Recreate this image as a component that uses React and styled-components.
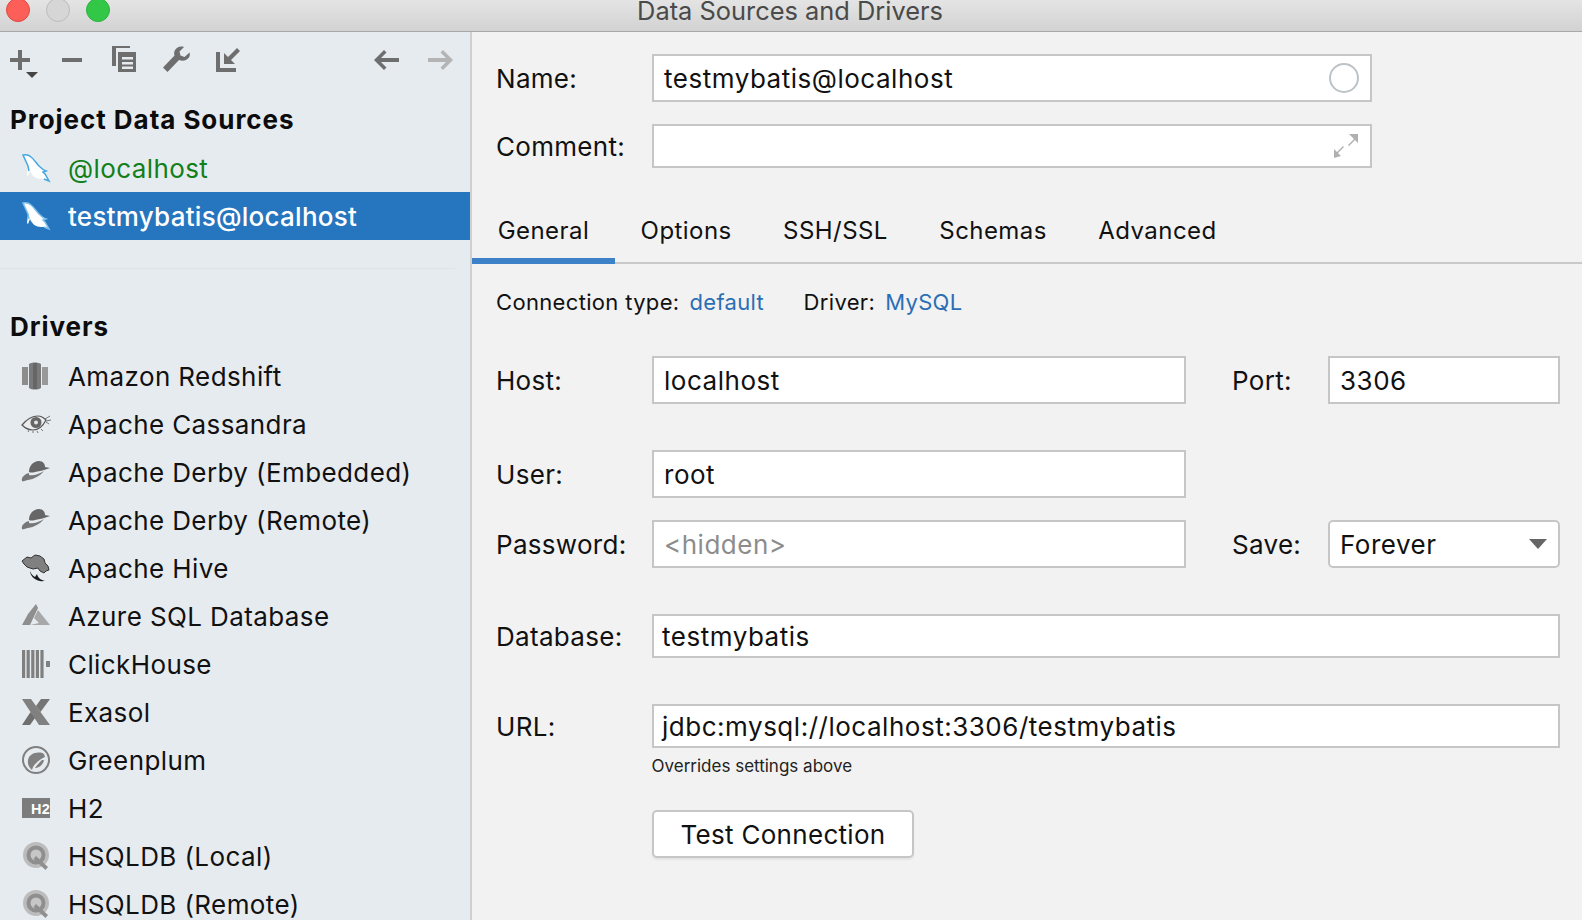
import React from 'react';
import styled, { createGlobalStyle } from 'styled-components';

const GlobalStyle = createGlobalStyle`
    html, body {
        margin: 0;
        padding: 0;
        height: 100%;
        overflow: hidden;
        background: #f2f2f2;
    }
    #root {
        height: 100%;
    }
`;

const Window = styled.div`
    width: 1582px;
    height: 920px;
    display: flex;
    flex-direction: column;
    overflow: hidden;
    font-family: Inter, "Liberation Sans", sans-serif;
    font-size: 26px;
    color: #111;
`;

const TitleBar = styled.div`
    flex: none;
    height: 31px;
    display: flex;
    align-items: center;
    position: relative;
    background: linear-gradient(#e4e4e4, #d2d2d2);
    border-bottom: 1px solid #a8a8a8;
`;

const Lights = styled.div`
    display: flex;
    gap: 16px;
    padding-left: 6px;
    margin-top: -11px;
`;

const Light = styled.span`
    width: 24px;
    height: 24px;
    border-radius: 50%;
    box-sizing: border-box;
    background: ${p => p.$color};
    border: 1px solid ${p => p.$edge};
`;

const Title = styled.div`
    position: absolute;
    left: 0;
    right: 2px;
    top: 0;
    line-height: 22px;
    text-align: center;
    color: #4a4a4a;
    font-size: 25.4px;
`;

const Body = styled.div`
    flex: 1;
    display: flex;
    min-height: 0;
`;

const Sidebar = styled.div`
    flex: none;
    width: 470px;
    background: #e6ebf0;
    border-right: 2px solid #d0d0d0;
    overflow: hidden;
`;

const Toolbar = styled.div`
    display: flex;
    align-items: center;
    height: 56px;
    padding-left: 9px;
`;

const ToolButton = styled.span`
    display: flex;
    margin-right: ${p => p.$gap || 0}px;
`;

const SectionTitle = styled.div`
    font-weight: 700;
    padding-left: 10px;
    margin-top: ${p => p.$top || 0}px;
    line-height: 32px;
    letter-spacing: 0.95px;
    color: #0c0c0c;
`;

const SourceList = styled.div`
    margin-top: 8px;
`;

const DriverList = styled.div`
    margin-top: 9px;
`;

const Row = styled.div`
    display: flex;
    align-items: center;
    height: 48px;
    padding-left: 21px;
    gap: 17px;
    letter-spacing: ${p => (p.$selected ? 0.27 : 0.4)}px;
    background: ${p => (p.$selected ? '#2675bf' : 'transparent')};
    color: ${p => (p.$selected ? '#fff' : p.$color || '#111')};
    white-space: nowrap;
    font-weight: ${p => (p.$selected ? 500 : 400)};
`;

const IconSlot = styled.span`
    flex: none;
    width: 30px;
    display: flex;
    justify-content: flex-start;
`;

const Divider = styled.div`
    height: 1px;
    background: #dfe3e8;
    margin: 28px 15px 42px 0;
`;

const Main = styled.div`
    flex: 1;
    min-width: 0;
    padding: 22px 22px 0 24px;
`;

const FormRow = styled.div`
    display: flex;
    align-items: center;
    margin-top: ${p => p.$top || 0}px;
`;

const Label = styled.div`
    flex: none;
    width: ${p => p.$width || 156}px;
    letter-spacing: 0.3px;
`;

const Field = styled.div`
    box-sizing: border-box;
    flex: ${p => (p.$width ? 'none' : 1)};
    width: ${p => (p.$width ? `${p.$width}px` : 'auto')};
    height: ${p => p.$height || 48}px;
    display: flex;
    align-items: center;
    justify-content: ${p => (p.$end ? 'flex-end' : 'space-between')};
    padding: 0 10px 0 ${p => p.$left || 10}px;
    background: #fff;
    border: 2px solid #c6c6c6;
    border-radius: ${p => (p.$round ? 5 : 0)}px;
    letter-spacing: 0.52px;
    color: ${p => (p.$muted ? '#8c8c8c' : '#111')};
`;

const Tabs = styled.div`
    display: flex;
    height: 74px;
    margin: 20px -22px 0 -24px;
    border-bottom: 2px solid #c9c9c9;
`;

const Tab = styled.div`
    display: flex;
    align-items: center;
    padding: 14px 25.7px 0;
    letter-spacing: 0.45px;
    font-size: 24px;
    margin-bottom: -2px;
    border-bottom: 6px solid ${p => (p.$active ? '#3d82c9' : 'transparent')};
`;

const InfoLine = styled.div`
    display: flex;
    align-items: center;
    margin-top: 22px;
    height: 32px;
    font-size: 22px;
    letter-spacing: 0.33px;
`;

const InfoLink = styled.span`
    color: #2a6fb5;
    margin: 0 39.5px 0 10px;
`;

const Hint = styled.div`
    margin: 6px 0 0 155.5px;
    font-size: 17px;
    line-height: 24px;
    color: #222;
`;

const TestButton = styled.div`
    box-sizing: border-box;
    width: 262px;
    height: 48px;
    margin: 32px 0 0 156px;
    display: flex;
    align-items: center;
    justify-content: center;
    background: #fff;
    border: 2px solid #c6c6c6;
    border-radius: 5px;
    letter-spacing: 0.3px;
    box-shadow: 0 2px 2px rgba(0, 0, 0, 0.06);
`;

const Gap = styled.span`
    flex: none;
    width: ${p => p.$width}px;
`;

const Svg = styled.svg`
    flex: none;
    display: block;
`;

const Glyph = ({ children, w = 28, h = 28 }) => (
    <Svg width={w} height={h} viewBox={`0 0 ${w} ${h}`}>
        {children}
    </Svg>
);

const Plus = () => (
    <Glyph w={30} h={36}>
        <path d="M9 8h4v8h8v4h-8v8H9v-8H1v-4h8z" fill="#6e6e6e" />
        <path d="M17 30h12l-6 6z" fill="#444" />
    </Glyph>
);
const Minus = () => <Glyph w={24} h={24}><path d="M2 10h20v4H2z" fill="#6e6e6e" /></Glyph>;
const Copy = () => (
    <Glyph w={26} h={28}>
        <path d="M0 0h18v2H4v18H0z" fill="#6e6e6e" />
        <path d="M6 6h18v20H6zM10 11v2.500h11V11zm0 5v2.500h11V16zm0 4.500V23h11v-2.500z" fill="#6e6e6e" fillRule="evenodd" />
    </Glyph>
);
const Wrench = () => (
    <Glyph w={30} h={28}>
        <path d="M27.500 6.500l-5 4.500-4-1.500-1-4L22 1c-4-1.500-8 .5-9.500 4-.5 1.500-.5 3 0 4.500L1 21.500 5.500 26 17 14c4 1.500 8 .5 10-2.500 1-1.500 1-3.500.5-5z" fill="#6e6e6e" />
    </Glyph>
);
const Import = () => (
    <Glyph w={26} h={28}>
        <path d="M0 6h4v16h16v4H0z" fill="#6e6e6e" />
        <path d="M8 7v11h11l-4-4 9-9-3-3-9 9z" fill="#6e6e6e" />
    </Glyph>
);
const Arrow = ({ flip, color }) => (
    <Glyph w={28} h={24}>
        <path d={flip ? 'M26 12l-10-10-2.500 2.500 5.500 5.500H1v4h18l-5.500 5.500L16 22z' : 'M2 12L12 2l2.500 2.500L9 10h18v4H9l5.500 5.500L12 22z'} fill={color} />
    </Glyph>
);
const Dolphin = ({ solid }) => (
    <Glyph w={30} h={30}>
        <path
            d="M2 2c3-.5 6 0 8 2 3 2 5 6 8 9 2 2 4 4 7 5l-3 1 2 2 4 7-5-2-3 0c-5 0-9-3-11-8l-2 5-1-1 1-9-5-11z"
            fill="#fff"
        />
        <path
            d="M8 18l-1-5-5-11c3-.5 6 0 8 2 3 2 5 6 8 9 2 2 4 4 7 5l-3 1 2 2 4 7-5-2"
            fill="none"
            stroke={solid ? '#79bdea' : '#45a7e0'}
            strokeWidth="1.500"
        />
    </Glyph>
);
const Redshift = () => (
    <Glyph w={28} h={28}>
        <path d="M1 5h6v18H1z" fill="#8c8c8c" />
        <path d="M8 2c3-2 9-2 12 0v24c-3 2-9 2-12 0z" fill="#7a7a7a" />
        <path d="M12 1h4v26h-4z" fill="#666" />
        <path d="M21 5h6v18h-6z" fill="#999" />
    </Glyph>
);
const Eye = () => (
    <Glyph w={30} h={28}>
        <path d="M1 15c5-6 10-9 16-9 3 0 5 1 8 4-3 6-8 10-13 10-4 0-8-2-11-5z" fill="#ececec" stroke="#555" strokeWidth="1.200" />
        <circle cx="15" cy="12.500" r="5.500" fill="#666" />
        <circle cx="15" cy="12.500" r="2" fill="#e4e4e4" />
        <path d="M24 9l5-3M25 11l5-1M25 12l3 2M8 20l-1 2M12 21v2M16 21l1 2M20 19l2 2" fill="none" stroke="#777" strokeWidth="1" />
    </Glyph>
);
const Hat = () => (
    <Glyph w={29} h={28}>
        <path d="M8 14c0-6 4-11 10-11 4 0 6 3 6 6l5 1c-5 2-10 3-15 4-2 .5-4 1-6 0z" fill="#666" />
        <path d="M1 23c-1-4 3-7 7-8v2c5 1 10-1 15-4-4 5-10 8-16 9-2 .5-6 2-6 1z" fill="#777" />
    </Glyph>
);
const Hive = () => (
    <Glyph w={30} h={28}>
        <path d="M1 7l5-4 4 1 4-3 5 1 4 3 1 4 3 3 1 4-3 1-2 2-4-2-2-3-5 1-6-2-3-3z" fill="#808080" stroke="#333" strokeWidth="1" />
        <path d="M9 17c0 4 4 9 10 10 2 .5 4 0 5 0-4-1-7-3-8-7l-2 3c-2-1-4-3-5-6z" fill="#1a1a1a" />
    </Glyph>
);
const Azure = () => (
    <Glyph w={29} h={28}>
        <path d="M15 2L7 12 1 23h8l8-17z" fill="#8e8e8e" />
        <path d="M17 8l-4 8 5 5-9 2h20z" fill="#a8a8a8" />
    </Glyph>
);
const ClickHouse = () => (
    <Glyph w={30} h={28}>
        <path d="M1 0h3.200v28H1zM5.600 0h3.200v28H5.600zM10.200 0h3.200v28h-3.200zM14.800 0H18v28h-3.200zM19.400 0h3.200v28h-3.200z" fill="#808080" />
        <path d="M25 11h4v6h-4z" fill="#808080" />
    </Glyph>
);
const Exasol = () => (
    <Glyph w={29} h={28}>
        <path d="M1 1h9l19 26H18z" fill="#808080" />
        <path d="M29 1h-9l-5 7 4.500 6z" fill="#757575" />
        <path d="M1 27h8l5-7-4.500-6z" fill="#6f6f6f" />
    </Glyph>
);
const Greenplum = () => (
    <Glyph w={29} h={28}>
        <circle cx="15" cy="14" r="13" fill="none" stroke="#808080" strokeWidth="2" />
        <path d="M9 22c-3-4-3-10 1-13 4-3 10-3 13-1l1 3c-3 1-9 5-12 10l-1 3z" fill="#808080" />
        <path d="M14 22c4 0 8-3 9-8l-2 0c-2 2-5 5-7 8z" fill="#808080" />
    </Glyph>
);
const H2 = () => (
    <Glyph w={29} h={20}>
        <path d="M1 0h28v20H1z" fill="#7c7c7c" />
        <text x="10" y="16" fontFamily="Liberation Sans" fontWeight="700" fontSize="14.500" fill="#fff">H2</text>
    </Glyph>
);
const Hsql = () => (
    <Glyph w={29} h={28}>
        <circle cx="15" cy="13" r="13" fill="#bcbcbc" />
        <circle cx="15" cy="13" r="7.500" fill="#c6c6c6" stroke="#8f8f8f" strokeWidth="4" />
        <path d="M15 14l12 11-2.500 3-12-11z" fill="#8f8f8f" />
    </Glyph>
);

const drivers = [
    { name: 'Amazon Redshift', icon: Redshift },
    { name: 'Apache Cassandra', icon: Eye },
    { name: 'Apache Derby (Embedded)', icon: Hat },
    { name: 'Apache Derby (Remote)', icon: Hat },
    { name: 'Apache Hive', icon: Hive },
    { name: 'Azure SQL Database', icon: Azure },
    { name: 'ClickHouse', icon: ClickHouse },
    { name: 'Exasol', icon: Exasol },
    { name: 'Greenplum', icon: Greenplum },
    { name: 'H2', icon: H2 },
    { name: 'HSQLDB (Local)', icon: Hsql },
    { name: 'HSQLDB (Remote)', icon: Hsql },
];

const App = () => {
    return (
        <Window>
            <GlobalStyle />
            <TitleBar>
                <Lights>
                    <Light $color="#fc5f57" $edge="#e2473f" />
                    <Light $color="#d6d6d6" $edge="#bcbcbc" />
                    <Light $color="#33c748" $edge="#2cb13c" />
                </Lights>
                <Title>Data Sources and Drivers</Title>
            </TitleBar>
            <Body>
                <Sidebar>
                    <Toolbar>
                        <ToolButton $gap={21}><Plus /></ToolButton>
                        <ToolButton $gap={28}><Minus /></ToolButton>
                        <ToolButton $gap={24}><Copy /></ToolButton>
                        <ToolButton $gap={24}><Wrench /></ToolButton>
                        <ToolButton $gap={130}><Import /></ToolButton>
                        <ToolButton $gap={27}><Arrow color="#6e6e6e" /></ToolButton>
                        <ToolButton><Arrow flip color="#b4b4b4" /></ToolButton>
                    </Toolbar>
                    <SectionTitle $top={16}>Project Data Sources</SectionTitle>
                    <SourceList>
                        <Row $color="#12801a">
                            <IconSlot><Dolphin /></IconSlot>@localhost
                        </Row>
                        <Row $selected>
                            <IconSlot><Dolphin solid /></IconSlot>testmybatis@localhost
                        </Row>
                    </SourceList>
                    <Divider />
                    <SectionTitle>Drivers</SectionTitle>
                    <DriverList>
                        {drivers.map((d, i) => (
                            <Row key={i}>
                                <IconSlot><d.icon /></IconSlot>{d.name}
                            </Row>
                        ))}
                    </DriverList>
                </Sidebar>
                <Main>
                    <FormRow>
                        <Label>Name:</Label>
                        <Field $width={720}>
                            testmybatis@localhost
                            <Svg width="32" height="32" viewBox="0 0 32 32"><circle cx="16" cy="16" r="14" fill="#fff" stroke="#bcc3c6" strokeWidth="2" /></Svg>
                        </Field>
                    </FormRow>
                    <FormRow $top={22}>
                        <Label>Comment:</Label>
                        <Field $width={720} $height={44} $end>
                            <Svg width="28" height="28" viewBox="0 0 28 28">
                                <path d="M17 2h9v9l-3-3-6 6-1-1 6-6zM2 26v-9l3 3 6-6 1 1-6 6 3 3z" fill="#b0b0b0" />
                            </Svg>
                        </Field>
                    </FormRow>
                    <Tabs>
                        <Tab $active>General</Tab>
                        <Tab>Options</Tab>
                        <Tab>SSH/SSL</Tab>
                        <Tab>Schemas</Tab>
                        <Tab>Advanced</Tab>
                    </Tabs>
                    <InfoLine>
                        Connection type:<InfoLink>default</InfoLink>
                        Driver:<InfoLink>MySQL</InfoLink>
                    </InfoLine>
                    <FormRow $top={38}>
                        <Label>Host:</Label>
                        <Field $width={534}>localhost</Field>
                        <Gap $width={46} />
                        <Label $width={96}>Port:</Label>
                        <Field $width={232}>3306</Field>
                    </FormRow>
                    <FormRow $top={46}>
                        <Label>User:</Label>
                        <Field $width={534}>root</Field>
                    </FormRow>
                    <FormRow $top={22}>
                        <Label>Password:</Label>
                        <Field $width={534} $muted>&lt;hidden&gt;</Field>
                        <Gap $width={46} />
                        <Label $width={96}>Save:</Label>
                        <Field $width={232} $round>
                            Forever
                            <Svg width="20" height="12" viewBox="0 0 20 12"><path d="M1 1h18l-9 10z" fill="#666" /></Svg>
                        </Field>
                    </FormRow>
                    <FormRow $top={46}>
                        <Label>Database:</Label>
                        <Field $height={44} $left={8}>testmybatis</Field>
                    </FormRow>
                    <FormRow $top={46}>
                        <Label>URL:</Label>
                        <Field $height={44} $left={8}>jdbc:mysql://localhost:3306/testmybatis</Field>
                    </FormRow>
                    <Hint>Overrides settings above</Hint>
                    <TestButton>Test Connection</TestButton>
                </Main>
            </Body>
        </Window>
    );
};

export default App;
